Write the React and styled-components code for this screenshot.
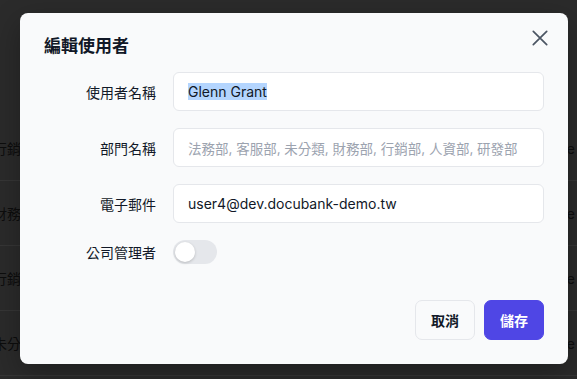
import React from "react";
import styled, { createGlobalStyle } from "styled-components";

const Global = createGlobalStyle`
  html, body { margin: 0; padding: 0; }
  body {
    font-family: "Inter", "Noto Sans CJK TC", sans-serif;
    background: #2b2b2b;
  }
`;

const Screen = styled.div`
  position: relative;
  width: 577px;
  height: 379px;
  overflow: hidden;
  background: #2b2b2b;
`;

const Table = styled.div`
  display: flex;
  flex-direction: column;
  padding-top: 116px;
`;

const TableRow = styled.div`
  height: 64px;
  display: flex;
  align-items: center;
  justify-content: space-between;
  border-bottom: 1px solid #363636;
  font-size: 14px;
  color: #0d0d0d;
`;

const LeftCell = styled.span`
  margin-left: -7px;
  white-space: nowrap;
`;

const RightCell = styled.span`
  margin-right: 2px;
  white-space: nowrap;
`;

const Modal = styled.div`
  position: absolute;
  top: 13px;
  left: 20px;
  width: 548px;
  box-sizing: border-box;
  padding: 20px 24px 24px;
  background: #f9fafb;
  border-radius: 8px;
  box-shadow: 0 10px 30px rgba(0, 0, 0, 0.3);
`;

const Title = styled.h2`
  margin: 0 0 13px;
  font-size: 17px;
  line-height: 26px;
  font-weight: 700;
  color: #111827;
`;

const CloseButton = styled.button`
  position: absolute;
  top: 17px;
  right: 20px;
  width: 16px;
  height: 16px;
  padding: 0;
  border: none;
  background: transparent;
  display: flex;
  cursor: pointer;
  color: #4b5563;
`;

const Form = styled.div`
  display: grid;
  grid-template-columns: 112px 1fr;
  column-gap: 17px;
  row-gap: 17px;
  align-items: center;
`;

const Label = styled.div`
  text-align: right;
  font-size: 14px;
  font-weight: 400;
  color: #111827;
  white-space: nowrap;
`;

const Field = styled.div`
  height: 39px;
  box-sizing: border-box;
  display: flex;
  align-items: center;
  padding: 0 14px;
  background: #ffffff;
  border: 1px solid #e5e7eb;
  border-radius: 6px;
  font-size: ${(p) => (p.$placeholder ? "13.5px" : "14px")};
  color: ${(p) => (p.$placeholder ? "#9ca3af" : "#111827")};
  white-space: nowrap;
  overflow: hidden;
`;

const Selected = styled.span`
  background: #b4d5fe;
  line-height: 17px;
`;

const Toggle = styled.div`
  width: 44px;
  height: 24px;
  border-radius: 12px;
  background: #e5e7eb;
  display: flex;
  align-items: center;
  padding: 2px;
  box-sizing: border-box;
`;

const Knob = styled.span`
  width: 20px;
  height: 20px;
  border-radius: 50%;
  background: #ffffff;
  box-shadow: 0 1px 3px rgba(0, 0, 0, 0.2);
`;

const Footer = styled.div`
  display: flex;
  justify-content: flex-end;
  gap: 9px;
  margin-top: 36px;
`;

const Button = styled.button`
  height: 40px;
  padding: 0 15px;
  border-radius: 7px;
  font-family: inherit;
  font-size: 14px;
  font-weight: 600;
  cursor: pointer;
  border: 1px solid ${(p) => (p.$primary ? "#4f46e5" : "#e5e7eb")};
  background: ${(p) => (p.$primary ? "#4f46e5" : "#f9fafb")};
  color: ${(p) => (p.$primary ? "#ffffff" : "#111827")};
`;

const rows = ["行銷部", "財務部", "行銷部", "未分類"];

export default function App() {
  return (
    <>
      <Global />
      <Screen>
        <Table>
          {rows.map((r, i) => (
            <TableRow key={i}>
              <LeftCell>{r}</LeftCell>
              <RightCell>Active</RightCell>
            </TableRow>
          ))}
        </Table>
        <Modal>
          <Title>編輯使用者</Title>
          <CloseButton aria-label="close">
            <svg width="16" height="16" viewBox="0 0 16 16" fill="none">
              <path
                d="M1.3 1.3 14.7 14.7M14.7 1.3 1.3 14.7"
                stroke="currentColor"
                strokeWidth="1.7"
                strokeLinecap="round"
              />
            </svg>
          </CloseButton>
          <Form>
            <Label>使用者名稱</Label>
            <Field>
              <Selected>Glenn Grant</Selected>
            </Field>
            <Label>部門名稱</Label>
            <Field $placeholder>法務部, 客服部, 未分類, 財務部, 行銷部, 人資部, 研發部</Field>
            <Label>電子郵件</Label>
            <Field>user4@dev.docubank-demo.tw</Field>
            <Label>公司管理者</Label>
            <div>
              <Toggle>
                <Knob />
              </Toggle>
            </div>
          </Form>
          <Footer>
            <Button>取消</Button>
            <Button $primary>儲存</Button>
          </Footer>
        </Modal>
      </Screen>
    </>
  );
}
